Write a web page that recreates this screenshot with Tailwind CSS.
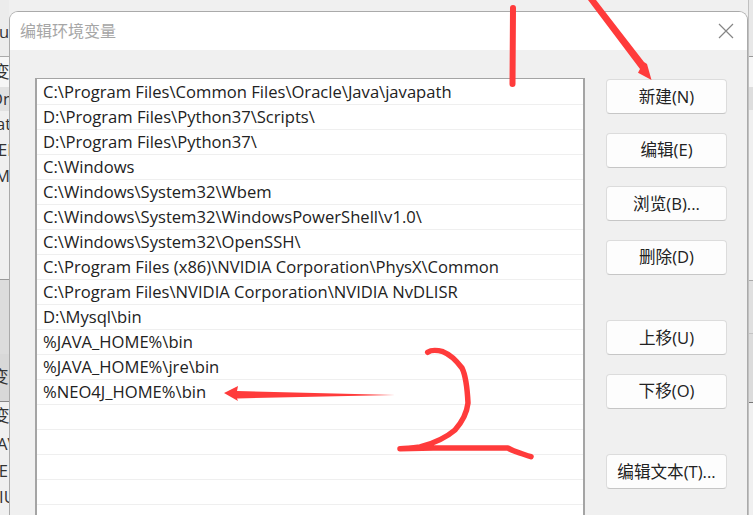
<!DOCTYPE html>
<html lang="zh-CN">
<head>
    <meta charset="UTF-8">
    <title>编辑环境变量</title>
    <script src="https://cdn.jsdelivr.net/npm/@tailwindcss/browser@4"></script>
</head>
<body class="bg-[#f0f0f0]">
    <div class="relative flex w-[753px] h-[515px] overflow-hidden font-['Open_Sans','Noto_Sans_CJK_SC',sans-serif] text-[16.6px] text-[#222]">

        <!-- window behind, left edge -->
        <div class="w-[9px] shrink-0 overflow-hidden flex flex-col text-[#333] whitespace-nowrap bg-[#f0f0f0]">
            <div class="h-[57px] shrink-0 bg-[#ececec] flex items-end pb-[11px] border-b border-[#aaa]"><span class="-ml-[10px]">gu</span></div>
            <div class="h-[30px] shrink-0 bg-[#f6f6f6] flex items-center"><span class="-ml-[7px]">变量</span></div>
            <div class="h-[24px] shrink-0 bg-[#e2e2e2] flex items-center"><span class="-ml-[10px]">On</span></div>
            <div class="h-[26px] shrink-0 flex items-center"><span class="-ml-[4px]">at</span></div>
            <div class="h-[26px] shrink-0 flex items-center"><span class="-ml-[2px]">EI</span></div>
            <div class="h-[26px] shrink-0 flex items-center"><span class="-ml-[5px]">M</span></div>
            <div class="h-[90px] shrink-0"></div>
            <div class="h-[75px] shrink-0 bg-[#dcdcdc] border-t border-[#999]"></div>
            <div class="h-[48px] shrink-0 bg-[#d8d8d8] flex items-center border-b border-[#888]"><span class="-ml-[8px]">变</span></div>
            <div class="h-[28px] shrink-0 flex items-center"><span class="-ml-[7px]">变量</span></div>
            <div class="h-[28px] shrink-0 flex items-center"><span class="-ml-[3px]">AV</span></div>
            <div class="h-[26px] shrink-0 flex items-center"><span class="-ml-[6px]">IE</span></div>
            <div class="h-[26px] shrink-0 flex items-center"><span class="-ml-[1px]">IU</span></div>
        </div>

        <!-- dialog -->
        <div class="flex-1 mt-[11px] flex flex-col rounded-t-[9px] overflow-hidden border border-b-0 border-[#aaaaaa]">
            <div class="h-[38px] shrink-0 bg-white flex items-center justify-between pl-[10px] pr-[13px]">
                <span class="text-[16px] text-[#a6a6a6]">编辑环境变量</span>
                <svg class="w-[16px] h-[16px]" viewBox="0 0 16 16" fill="none" stroke="#858585" stroke-width="1.2">
                    <path d="M1 1 L15 15 M15 1 L1 15"/>
                </svg>
            </div>
            <div class="flex-1 bg-[#f0f0f0] flex gap-[21px] pl-[25px] pr-[20px] pt-[28px] min-h-0">
                <ul class="w-[550px] shrink-0 bg-white pt-[1px] border-t border-l-2 border-r-2 border-[#a4a4a4] h-[460px] overflow-hidden">
                    <li class="h-[25px] pl-[6px] leading-[24px] border-b border-[#efefef] whitespace-nowrap">C:\Program Files\Common Files\Oracle\Java\javapath</li>
                    <li class="h-[25px] pl-[6px] leading-[24px] border-b border-[#efefef] whitespace-nowrap">D:\Program Files\Python37\Scripts\</li>
                    <li class="h-[25px] pl-[6px] leading-[24px] border-b border-[#efefef] whitespace-nowrap">D:\Program Files\Python37\</li>
                    <li class="h-[25px] pl-[6px] leading-[24px] border-b border-[#efefef] whitespace-nowrap">C:\Windows</li>
                    <li class="h-[25px] pl-[6px] leading-[24px] border-b border-[#efefef] whitespace-nowrap">C:\Windows\System32\Wbem</li>
                    <li class="h-[25px] pl-[6px] leading-[24px] border-b border-[#efefef] whitespace-nowrap">C:\Windows\System32\WindowsPowerShell\v1.0\</li>
                    <li class="h-[25px] pl-[6px] leading-[24px] border-b border-[#efefef] whitespace-nowrap">C:\Windows\System32\OpenSSH\</li>
                    <li class="h-[25px] pl-[6px] leading-[24px] border-b border-[#efefef] whitespace-nowrap">C:\Program Files (x86)\NVIDIA Corporation\PhysX\Common</li>
                    <li class="h-[25px] pl-[6px] leading-[24px] border-b border-[#efefef] whitespace-nowrap">C:\Program Files\NVIDIA Corporation\NVIDIA NvDLISR</li>
                    <li class="h-[25px] pl-[6px] leading-[24px] border-b border-[#efefef] whitespace-nowrap">D:\Mysql\bin</li>
                    <li class="h-[25px] pl-[6px] leading-[24px] border-b border-[#efefef] whitespace-nowrap">%JAVA_HOME%\bin</li>
                    <li class="h-[25px] pl-[6px] leading-[24px] border-b border-[#efefef] whitespace-nowrap">%JAVA_HOME%\jre\bin</li>
                    <li class="h-[25px] pl-[6px] leading-[24px] border-b border-[#efefef] whitespace-nowrap">%NEO4J_HOME%\bin</li>
                    <li class="h-[25px] border-b border-[#efefef]"></li>
                    <li class="h-[25px] border-b border-[#efefef]"></li>
                    <li class="h-[25px] border-b border-[#efefef]"></li>
                    <li class="h-[25px] border-b border-[#efefef]"></li>
                    <li class="h-[25px] border-b border-[#efefef]"></li>
                </ul>
                <div class="w-[121px] shrink-0 flex flex-col gap-[18.5px] pt-[1px]">
                    <button class="h-[35px] shrink-0 pt-[1px] bg-[#fdfdfd] border border-[#dcdcdc] border-b-[#c6c6c6] rounded-[4px]">新建(N)</button>
                    <button class="h-[35px] shrink-0 pt-[1px] bg-[#fdfdfd] border border-[#dcdcdc] border-b-[#c6c6c6] rounded-[4px]">编辑(E)</button>
                    <button class="h-[35px] shrink-0 pt-[1px] bg-[#fdfdfd] border border-[#dcdcdc] border-b-[#c6c6c6] rounded-[4px]">浏览(B)...</button>
                    <button class="h-[35px] shrink-0 pt-[1px] bg-[#fdfdfd] border border-[#dcdcdc] border-b-[#c6c6c6] rounded-[4px]">删除(D)</button>
                    <button class="h-[35px] shrink-0 pt-[1px] mt-[27px] bg-[#fdfdfd] border border-[#dcdcdc] border-b-[#c6c6c6] rounded-[4px]">上移(U)</button>
                    <button class="h-[35px] shrink-0 pt-[1px] bg-[#fdfdfd] border border-[#dcdcdc] border-b-[#c6c6c6] rounded-[4px]">下移(O)</button>
                    <button class="h-[35px] shrink-0 pt-[1px] mt-[27px] bg-[#fdfdfd] border border-[#dcdcdc] border-b-[#c6c6c6] rounded-[4px]">编辑文本(T)...</button>
                </div>
            </div>
        </div>

        <!-- window behind, right edge -->
        <div class="w-[5px] shrink-0 flex flex-col border-l border-[#c0c0c0] bg-[#f0f0f0]">
            <div class="h-[57px] shrink-0 bg-[#e8e8e8] border-b border-[#999]"></div>
            <div class="h-[30px] shrink-0 bg-[#f6f6f6]"></div>
            <div class="h-[23px] shrink-0 bg-[#dedede]"></div>
            <div class="h-[170px] shrink-0"></div>
            <div class="h-[53px] shrink-0 bg-[#e0e0e0] border-t border-[#aaa]"></div>
            <div class="h-[70px] shrink-0 bg-[#dcdcdc] border-t border-[#c4c4c4] border-b-[#777] border-b"></div>
        </div>

        <!-- red marks drawn on top of the screenshot -->
        <svg class="absolute inset-0 pointer-events-none" width="753" height="515" viewBox="0 0 753 515" fill="none">
            <path d="M513 8 L512.5 84" stroke="#ff3b3b" stroke-width="6" stroke-linecap="round"/>
            <path d="M588 0 L596 0 L644 62 L647 64 L651.5 80 L638 72.700 L640 69 Z" fill="#ff3b3b"/>
            <path d="M224 393 L238 386 L237 391 L395 395 L237 398.5 L238 401 Z" fill="#ff3b3b"/>
            <path d="M427.700 352.300 C431 350 437 350 443 351.700 C449 354 456 360 462 368 C465 374 467 383 468 403 C467 412 462 422 455 430 C448 436 435 443 420 447 C412 448 406 448.700 400 448.700 L433 448 L508 448 C512 451 520 453 531 456.700" stroke="#ff3b3b" stroke-width="5.500" stroke-linecap="round" stroke-linejoin="round"/>
        </svg>
    </div>
</body>
</html>
